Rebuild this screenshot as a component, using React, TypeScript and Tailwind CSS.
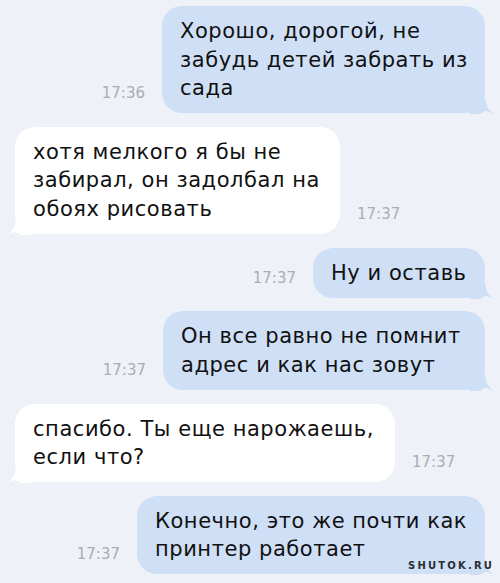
import React from "react";

const font = { fontFamily: '"DejaVu Sans", "Liberation Sans", sans-serif' };

function TailRight({ color }: { color: string }) {
  return (
    <svg className="absolute right-[-9px] bottom-[-1px]" width="24" height="16" viewBox="0 0 24 16">
      <path d="M0 16 L10 16 C13 14 15 13 16 13 C18 13 20 15 24 16 C19 13 16 8 15 0 L0 0 Z" fill={color} />
    </svg>
  );
}

function TailLeft({ color }: { color: string }) {
  return (
    <svg className="absolute left-[-8px] bottom-[-1px]" width="24" height="16" viewBox="0 0 24 16">
      <path d="M24 16 L14 16 C11 14 9 13 8 13 C6 13 4 15 0 16 C5 13 8 8 9 0 L24 0 Z" fill={color} />
    </svg>
  );
}

function Time({ t }: { t: string }) {
  return (
    <div className="text-[15px] leading-[18px] text-[#a9adb4] mb-[11px]" style={font}>
      {t}
    </div>
  );
}

function Out({ lines, time, w }: { lines: string[]; time: string; w: string }) {
  return (
    <div className="flex justify-end items-end gap-[17px] pr-[15px]">
      <Time t={time} />
      <div className={`relative bg-[#cfe0f6] rounded-[20px] pl-[18px] pr-[12px] pt-[11px] pb-[10.5px] ${w}`}>
        {lines.map((l, i) => (
          <div key={i} className="whitespace-nowrap text-[21px] leading-[28.5px] tracking-[0.55px] text-[#111]" style={font}>
            {l}
          </div>
        ))}
        <TailRight color="#cfe0f6" />
      </div>
    </div>
  );
}

function In({ lines, time, w }: { lines: string[]; time: string; w: string }) {
  return (
    <div className="flex justify-start items-end gap-[17px] pl-[15px]">
      <div className={`relative bg-white rounded-[20px] pl-[18px] pr-[12px] pt-[11px] pb-[10.5px] ${w}`}>
        {lines.map((l, i) => (
          <div key={i} className="whitespace-nowrap text-[21px] leading-[28.5px] tracking-[0.55px] text-[#111]" style={font}>
            {l}
          </div>
        ))}
        <TailLeft color="#ffffff" />
      </div>
      <Time t={time} />
    </div>
  );
}

export default function App() {
  return (
    <div className="relative w-[500px] h-[583px] overflow-hidden bg-[#eef2f8] pt-[6px] flex flex-col gap-[13.8px]">
      <Out lines={["Хорошо, дорогой, не", "забудь детей забрать из", "сада"]} time="17:36" w="w-[323px]" />
      <In lines={["хотя мелкого я бы не", "забирал, он задолбал на", "обоях рисовать"]} time="17:37" w="w-[325px]" />
      <Out lines={["Ну и оставь"]} time="17:37" w="w-[172px]" />
      <Out lines={["Он все равно не помнит", "адрес и как нас зовут"]} time="17:37" w="w-[322px]" />
      <In lines={["спасибо. Ты еще нарожаешь,", "если что?"]} time="17:37" w="w-[380px]" />
      <Out lines={["Конечно, это же почти как", "принтер работает"]} time="17:37" w="w-[348px]" />
      <div
        className="absolute left-[408px] top-[560px] text-[10px] leading-[12px] font-bold tracking-[2.2px] text-[#2a2e33]"
        style={{ fontFamily: '"DejaVu Sans", sans-serif' }}
      >
        SHUTOK.RU
      </div>
    </div>
  );
}
